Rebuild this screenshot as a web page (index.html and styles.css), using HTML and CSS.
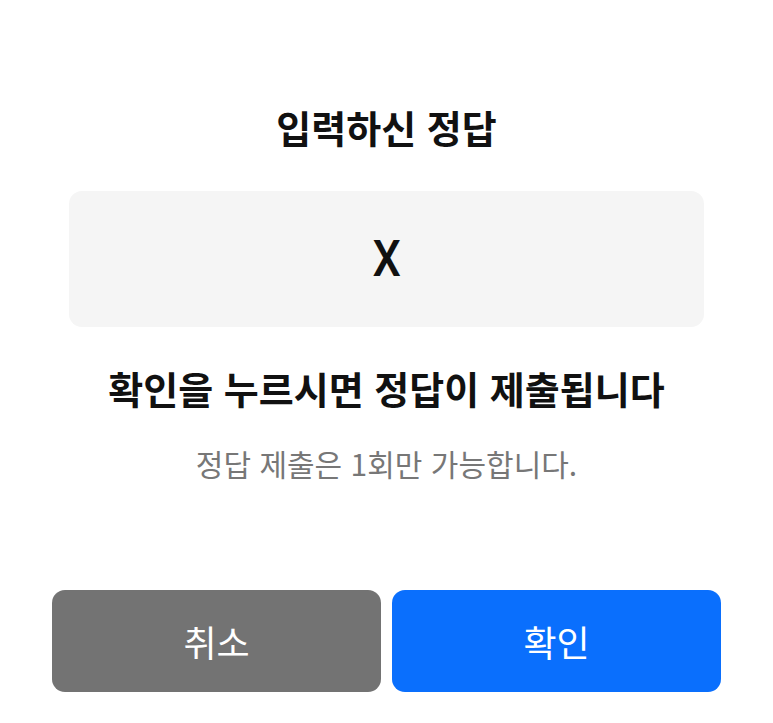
FILE: index.html
```html
<!DOCTYPE html>
<html lang="ko">
<head>
    <meta charset="utf-8">
    <title>정답 제출</title>
    <link rel="stylesheet" href="styles.css">
</head>
<body>
    <div class="dialog">
        <h1 class="dialog-title">입력하신 정답</h1>
        <div class="answer-box">
            <span class="answer-text">X</span>
        </div>
        <p class="notice">확인을 누르시면 정답이 제출됩니다</p>
        <p class="notice-sub">정답 제출은 1회만 가능합니다.</p>
        <div class="actions">
            <button class="btn btn--cancel">취소</button>
            <button class="btn btn--confirm">확인</button>
        </div>
    </div>
</body>
</html>
```

FILE: styles.css
```css
:root {
    --radius: 13px;
}

body {
    margin: 0;
    background: #ffffff;
    font-family: "Noto Sans CJK KR", "Noto Sans", sans-serif;
    color: #111111;
}

.dialog {
    padding: 103px 52px 0;
}

.dialog-title {
    margin: 0;
    font-size: 38px;
    line-height: 48px;
    font-weight: 700;
    text-align: center;
}

.answer-box {
    margin: 40px 17px 0;
    height: 136px;
    background-color: #f5f5f5;
    border-radius: var(--radius);
    display: flex;
    align-items: center;
    justify-content: center;
}

.answer-text {
    font-family: "Roboto", "Noto Sans", sans-serif;
    font-size: 50px;
    font-weight: 500;
    transform: scaleX(0.9);
}

.notice {
    margin: 37px 0 0;
    font-size: 38px;
    line-height: 48px;
    font-weight: 700;
    text-align: center;
}

.notice-sub {
    margin: 33px 0 0;
    font-size: 30px;
    line-height: 36px;
    color: #777777;
    text-align: center;
}

.actions {
    display: flex;
    gap: 11px;
    margin-top: 109px;
}

.btn {
    flex: 1;
    height: 102px;
    border: none;
    border-radius: var(--radius);
    color: #ffffff;
    font-family: inherit;
    font-size: 36px;
}

.btn--cancel {
    background-color: #737373;
}

.btn--confirm {
    background-color: #0a6ffd;
}
```
